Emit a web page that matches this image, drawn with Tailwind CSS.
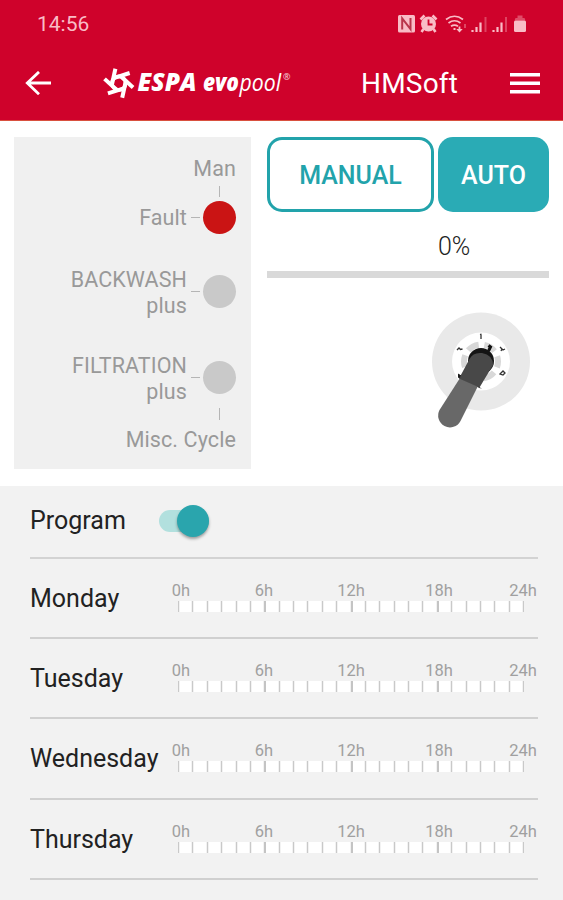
<!DOCTYPE html>
<html lang="en">
<head>
    <meta charset="UTF-8">
    <meta name="viewport" content="width=device-width, initial-scale=1.0">
    <title>ESPA evopool</title>
    <script src="https://cdn.jsdelivr.net/npm/@tailwindcss/browser@4"></script>
</head>
<body class="h-[900px] overflow-hidden bg-white font-[Roboto,sans-serif]">
    <!-- Header -->
    <header class="h-[121px] bg-[#cf022b] border-b border-[#d9503f] text-white">
        <div class="h-12 pl-[37px] pr-9 flex items-center justify-between">
            <span class="text-[21px] leading-6 text-[#f9bcc6]">14:56</span>
            <svg class="w-[130px] h-5 text-[#f9bcc6]" viewBox="397 14 130 20" fill="none" stroke="currentColor">
                <!-- NFC -->
                <rect x="398" y="15" width="17" height="17.5" rx="1.5" fill="currentColor" stroke="none"/>
                <path d="M402.2 29.5V18.5L410.5 29V18" stroke="#b9354b" stroke-width="2"/>
                <!-- alarm -->
                <circle cx="428.5" cy="24" r="7.5" fill="currentColor" stroke="none"/>
                <path d="M420.5 19.500l4-4M436.500 19.500l-4-4M423.500 29l-2 3M433.500 29l2 3" stroke-width="2.600"/>
                <path d="M428.500 19.500v5h4" stroke="#cf022b" stroke-width="1.800"/>
                <!-- wifi -->
                <path d="M446 19.500q8.500-6.500 17 0M448.500 23q6-4.500 12 0M451 26.300q3.500-2.500 7 0" stroke-width="1.700"/>
                <path d="M453.500 29h2M459.500 26.500v4" stroke-width="1.800"/>
                <path d="M456.300 29h6.400l-3.200 3.500z" fill="currentColor" stroke="none"/>
                <path d="M465 24v4" stroke-width="1.500" opacity=".5"/>
                <!-- signal bars -->
                <path d="M472.500 30v2M476.500 27v5M480.500 22.500v9.500M493.500 30v2M497.500 27v5M501.500 22.500v9.500" stroke-width="2.200"/>
                <path d="M485.500 17v15M506 17v15" stroke-width="2" opacity=".35"/>
                <!-- battery -->
                <rect x="514" y="20.500" width="12" height="11.500" rx="1.500" fill="currentColor" stroke="none"/>
                <path d="M514.500 20.500l1-2.500h2v-2.500h5v2.500h2l1 2.500z" fill="currentColor" stroke="none" opacity=".4"/>
            </svg>
        </div>
        <div class="h-[70px] pl-[25px] pr-[23px] flex items-center">
            <svg class="w-[26px] h-6" viewBox="0 0 26 24" fill="none" stroke="currentColor" stroke-width="2.800">
                <path d="M14 .900L2.300 12 14 23.200M2.300 12H26"/>
            </svg>
            <svg class="ml-[52px] w-[190px] h-8" viewBox="103 67 190 32" fill="#fff" font-family="'Open Sans',sans-serif" font-style="italic">
                <g transform="translate(118.800 83.200)" fill="none" stroke="#fff" stroke-width="4">
                    <circle r="6.800" stroke-width="3.600"/>
                    <path d="M-6.800 1L-3.400-14.500"/>
                    <path d="M-6.800 1L-3.400-14.500" transform="rotate(60)"/>
                    <path d="M-6.800 1L-3.400-14.500" transform="rotate(120)"/>
                    <path d="M-6.800 1L-3.400-14.500" transform="rotate(180)"/>
                    <path d="M-6.800 1L-3.400-14.500" transform="rotate(240)"/>
                    <path d="M-6.800 1L-3.400-14.500" transform="rotate(300)"/>
                </g>
                <text x="137.500" y="90.500" font-size="24" font-weight="800" textLength="59" lengthAdjust="spacingAndGlyphs">ESPA</text>
                <text x="203" y="90.500" font-size="24" font-weight="800" textLength="36" lengthAdjust="spacingAndGlyphs">evo</text>
                <text x="239.500" y="90.500" font-size="24" font-weight="400" textLength="41.500" lengthAdjust="spacingAndGlyphs">pool</text>
                <text x="283" y="80" font-size="9" font-style="normal" opacity=".8">®</text>
            </svg>
            <h1 class="ml-[68px] pt-0.5 text-[28px] leading-8 tracking-[0.2px]">HMSoft</h1>
            <svg class="ml-auto w-[30px] h-[21px]" viewBox="0 0 30 21" fill="currentColor">
                <path d="M0 0h30v3.500H0zM0 8.500h30v3.500H0zM0 17h30v3.500H0z"/>
            </svg>
        </div>
    </header>

    <main class="h-[365px] pt-4 pl-3.5 pr-3.5 flex gap-4">
        <!-- Status panel -->
        <section class="w-[238px] h-[332px] pt-[19px] pr-[15px] bg-[#f0f0f0] flex flex-col items-end text-right text-[21.5px] leading-[26px] tracking-[0.1px] text-[#999]">
            <div>Man</div>
            <div class="mt-1 mr-4 w-px h-[11px] bg-[#b5b5b5]"></div>
            <div class="mt-1 h-[33px] flex items-center">
                <span>Fault</span>
                <i class="ml-1 mr-[3px] w-[9px] h-px bg-[#b5b5b5]"></i>
                <i class="size-[33px] rounded-full bg-[#ca1414]"></i>
            </div>
            <div class="mt-[33px] flex items-center">
                <span>BACKWASH<br>plus</span>
                <i class="ml-1 mr-[3px] mb-[3px] w-[9px] h-px bg-[#b5b5b5]"></i>
                <i class="mb-[3px] size-[33px] rounded-full bg-[#c9c9c9]"></i>
            </div>
            <div class="mt-[34px] flex items-center">
                <span>FILTRATION<br>plus</span>
                <i class="ml-1 mr-[3px] mb-[3px] w-[9px] h-px bg-[#b5b5b5]"></i>
                <i class="mb-[3px] size-[33px] rounded-full bg-[#c9c9c9]"></i>
            </div>
            <div class="mt-[3px] mr-4 w-px h-3 bg-[#b5b5b5]"></div>
            <div class="mt-[7px]">Misc. Cycle</div>
        </section>

        <!-- Mode and valve -->
        <section class="flex-1 flex flex-col">
            <div class="flex gap-1 text-[25px] font-medium">
                <button class="w-[167px] h-[75px] pt-0.5 rounded-[15px] border-[3px] border-[#22a3ab] text-[#22a3ab]">MANUAL</button>
                <button class="w-[111px] h-[75px] pt-0.5 rounded-[15px] bg-[#2aabb5] text-white">AUTO</button>
            </div>
            <div class="mt-[19px] ml-[171px] text-[25px] leading-8 font-light text-[#222]">0%</div>
            <div class="mt-2 h-[7px] bg-[#d9d9d9]"></div>
            <svg class="mt-[34px] ml-[165px] w-[100px] h-[120px]" viewBox="432 312 100 120">
                <circle cx="481" cy="361.500" r="49" fill="#e9e9e9"/>
                <circle cx="481" cy="361.500" r="29" fill="#fff"/>
                <circle cx="481" cy="361.500" r="17" fill="none" stroke="#d8d8d8" stroke-width="6" stroke-dasharray="12 5.800" stroke-dashoffset="6"/>
                <path d="M481 334v5M480 334.500l1.500-.5M457 350l2-2 1.500 1.500 2-.500M500 347l3 3 2-1M502 349l-1 2M500 374l3-3 2 2-2 2zM459 375l2 1" fill="none" stroke="#333" stroke-width="1.300"/>
                <path d="M488.500 345.500l2 1.500-2 4" fill="none" stroke="#111" stroke-width="3"/>
                <circle cx="481" cy="361" r="13" fill="#141414"/>
                <path d="M460 378L439.500 410A11.800 11.800 0 0 0 460.500 421L478 386Z" fill="#686868"/>
                <path d="M469.500 359Q473 352 482 353Q493 355 493 365L479.500 387.500L459 378.500Z" fill="#484848"/>
                <path d="M458 373.500l3 2-1.500 3-1.500-1zM477 386l5 2.500-3-.500z" fill="#1c1c1c"/>
            </svg>
        </section>
    </main>

    <!-- Weekly program -->
    <section class="h-[414px] pl-[30px] pr-[25px] bg-[#f2f2f2] text-[25px] text-[#222]">
        <div class="h-[73px] pb-0.5 flex items-center border-b-2 border-[#d3d3d3]">
            <span class="w-[129px]">Program</span>
            <div class="w-[50px] h-[22px] rounded-full bg-[#b2e0de] flex items-center justify-end">
                <div class="size-8 rounded-full bg-[#2aa5ad] shadow-[0_2px_3px_rgba(0,0,0,0.35)]"></div>
            </div>
        </div>
        <div id="days"></div>
    </section>

    <script>
        const days = ['Monday', 'Tuesday', 'Wednesday', 'Thursday'];
        const hours = Array.from({ length: 24 }, (_, i) =>
            i % 6 === 0 && i > 0
                ? '<i class="flex-1 border-l-2 border-[#c4c4c4] pr-px"><b class="block h-full bg-white"></b></i>'
                : '<i class="flex-1 border-l border-[#c9c9c9] px-px"><b class="block h-full bg-white"></b></i>'
        ).join('');

        document.getElementById('days').innerHTML = days.map(day => `
            <div class="h-[80.2px] flex border-b-2 border-[#d0d0d0]">
                <div class="w-[148px] pt-[22px] leading-9">${day}</div>
                <div class="w-[346px] pt-[22px]">
                    <div class="flex pl-[3px] text-[16.5px] leading-5 text-[#a0a0a0]">
                        <span class="w-[83px] flex"><span class="-translate-x-1/2">0h</span></span>
                        <span class="w-[87px] flex"><span class="-translate-x-1/2">6h</span></span>
                        <span class="w-[88px] flex"><span class="-translate-x-1/2">12h</span></span>
                        <span class="w-[84px] flex"><span class="-translate-x-1/2">18h</span></span>
                        <span class="w-0 flex"><span class="-translate-x-1/2">24h</span></span>
                    </div>
                    <div class="h-[11px] flex border-r border-[#c9c9c9]">${hours}</div>
                </div>
            </div>`).join('');
    </script>
</body>
</html>
